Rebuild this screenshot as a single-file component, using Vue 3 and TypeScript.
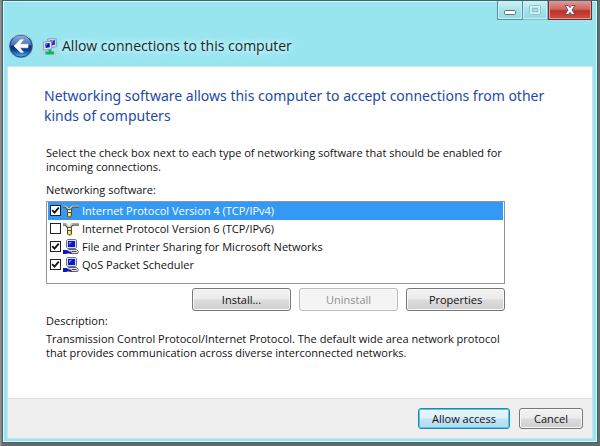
<script setup lang="ts">
import { computed, ref } from 'vue'

interface Component {
  id: string
  name: string
  kind: 'protocol' | 'service'
  enabled: boolean
}

const components = ref<Component[]>([
  { id: 'ipv4', name: 'Internet Protocol Version 4 (TCP/IPv4)', kind: 'protocol', enabled: true },
  { id: 'ipv6', name: 'Internet Protocol Version 6 (TCP/IPv6)', kind: 'protocol', enabled: false },
  { id: 'sharing', name: 'File and Printer Sharing for Microsoft Networks', kind: 'service', enabled: true },
  { id: 'qos', name: 'QoS Packet Scheduler', kind: 'service', enabled: true },
])
const selectedId = ref('ipv4')
const canUninstall = computed(() => components.value.some((c) => c.id === selectedId.value && c.kind === 'service'))
</script>

<template>
  <div class="desktop">
    <div class="window">
      <div class="caption">
        <button class="cap" type="button" aria-label="Minimize">
          <svg width="14" height="12" viewBox="0 0 14 12"><rect x="1.5" y="6.5" width="11" height="4" rx="1" fill="#fff" stroke="#5c6f7c" /></svg>
        </button>
        <button class="cap cap-max" type="button" aria-label="Maximize" disabled>
          <svg width="14" height="12" viewBox="0 0 14 12" fill="none"><rect x="2.5" y="2" width="9" height="7.5" stroke="#d5f3f7" stroke-width="2" /><rect x="1.5" y="1.5" width="11" height="9" rx="1" stroke="#8fbfc9" /><rect x="4.5" y="4.5" width="5" height="3" stroke="#8fbfc9" /></svg>
        </button>
        <button class="cap cap-close" type="button" aria-label="Close">
          <svg width="14" height="12" viewBox="0 0 14 12"><path d="M2 1.500h3.300L7 3.600l1.700-2.100H12L9 6l3 4.500H8.700L7 8.400l-1.700 2.100H2L5 6z" fill="#fff" stroke="#66525c" stroke-width="1" /></svg>
        </button>
      </div>
      <header class="titlebar">
        <button class="back" type="button" aria-label="Back">
          <svg width="26" height="26" viewBox="0 0 26 26">
            <defs>
              <linearGradient id="orb" x1="0" y1="0" x2="0" y2="1">
                <stop offset="0" stop-color="#91b3dd" /><stop offset=".46" stop-color="#456fb6" />
                <stop offset=".5" stop-color="#0d2b77" /><stop offset=".72" stop-color="#12489c" /><stop offset="1" stop-color="#41c5f2" />
              </linearGradient>
            </defs>
            <circle cx="13" cy="13" r="12" fill="#6e96b4" />
            <circle cx="13" cy="13" r="11" fill="url(#orb)" stroke="#294d87" />
            <path d="M5 4.800a11 11 0 0 1 16 0" fill="none" stroke="#d3e7f6" stroke-opacity=".7" />
            <path d="M6 13l6.500-6.300h3L11.800 11.200H20v3.600h-8.200l3.700 4.500h-3z" fill="#fff" stroke="#fff" stroke-width=".6" stroke-linejoin="round" />
          </svg>
        </button>
        <svg class="net-icon" width="16" height="17" viewBox="0 0 16 17">
          <path d="M5.500 1l8.500-1 .8 8.500-7 1.500z" fill="#d3d7df" stroke="#8391a6" stroke-width=".8" />
          <path d="M8 2.300l4.700-.6.400 5-4 .8z" fill="#2a35cc" /><path d="M9 2.300l3-.3-2 2.800z" fill="#8e9ff0" />
          <path d="M1.300 4l8-.6.500 7.400-8 1.300z" fill="#e4e7ed" stroke="#8391a6" stroke-width=".8" />
          <path d="M3.200 5.400l4.400-.4.300 4.200-4.200.8z" fill="#0814bd" /><path d="M3.500 5.700l2.800-.3-2.300 2.800z" fill="#6478ea" />
          <path d="M0 14.500h15" stroke="#c3cfd2" stroke-width="3" /><path d="M6.500 11.500h3v2H12v3H3.500v-3h3z" fill="#18ae69" stroke="#4ed08c" stroke-width=".5" />
        </svg>
        <h1>Allow connections to this computer</h1>
      </header>

      <form class="page" @submit.prevent>
        <main>
          <h2>Networking software allows this computer to accept connections from other kinds of computers</h2>
          <p class="intro">Select the check box next to each type of networking software that should be enabled for incoming connections.</p>
          <p id="list-label" class="list-label">Networking software:</p>
          <ul class="list" aria-labelledby="list-label">
            <li v-for="c in components" :key="c.id" :class="{ selected: c.id === selectedId }" @click="selectedId = c.id">
              <span class="check">
                <input :id="c.id" v-model="c.enabled" type="checkbox" />
                <svg v-if="c.enabled" width="11" height="11" viewBox="0 0 11 11"><path d="M2.200 5.200l2.300 2.500 4.300-5" fill="none" stroke="#111" stroke-width="1.800" /></svg>
              </span>
              <svg v-if="c.kind === 'protocol'" class="glyph" width="16" height="16" viewBox="0 0 16 16">
                <path d="M0 3.500h2.500l3.500 4 3.500-4H16" fill="none" stroke="#55554c" stroke-width="2.600" />
                <path d="M0 3h2.800l3.200 3.500L9.200 3H16" fill="none" stroke="#d6d4c8" stroke-width="1.200" />
                <rect x="4.500" y="6.500" width="4" height="3" fill="#e8e5d2" stroke="#55554c" />
                <path d="M4.500 9.500h4v3.500l-1 1h-2l-1-1z" fill="#ecd23a" stroke="#5a4d10" />
                <path d="M6 10v3" stroke="#fff6b0" />
              </svg>
              <svg v-else class="glyph" width="16" height="16" viewBox="0 0 16 16">
                <path d="M3.500 1.500l1-1h8l1 1v7l-1 1h-8l-1-1z" fill="#dcdee6" stroke="#6d7288" />
                <path d="M5 2h7v6H5z" fill="#0a18d6" /><path d="M6 3h3L6 6z" fill="#6f8cff" />
                <path d="M4.500 11.500l1.500-1h7.500l2 2-1 2H7z" fill="#e3e5ea" stroke="#5b5f70" />
                <path d="M9 12.500h4.500" stroke="#3c3f4c" />
                <path d="M0 11h3.500l2 1.500h3v2h-4L3 15H0z" fill="#0a18b8" />
              </svg>
              <label :for="c.id">{{ c.name }}</label>
            </li>
          </ul>
          <div class="actions">
            <button class="btn" type="button">Install...</button>
            <button class="btn" type="button" :disabled="!canUninstall">Uninstall</button>
            <button class="btn" type="button">Properties</button>
          </div>
          <p class="desc-label">Description:</p>
          <p class="description">Transmission Control Protocol/Internet Protocol. The default wide area network protocol that provides communication across diverse interconnected networks.</p>
        </main>
        <footer>
          <button class="btn primary" type="submit">Allow access</button>
          <button class="btn cancel" type="button">Cancel</button>
        </footer>
      </form>
    </div>
  </div>
</template>

<style>
body {
  margin: 0;
}
</style>

<style scoped>
* {
  box-sizing: border-box;
}
h1,
h2,
p,
ul {
  margin: 0;
  padding: 0;
  font-weight: 400;
}
button {
  font: inherit;
  padding: 0;
}
svg {
  display: block;
}
.desktop {
  display: flex;
  min-height: 100vh;
  padding: 0 2px 3px;
  background: linear-gradient(90deg, #999 0, #777 2px, #636b6c 3px, #636b6c);
  font-family: "Open Sans", "Noto Sans", sans-serif;
  font-size: 11px;
  line-height: 14px;
  color: #111;
}
.window {
  flex: 1;
  display: flex;
  flex-direction: column;
  min-width: 0;
  padding: 0 4px 3px;
  border: 1px solid #40646b;
  background: #98e5f0;
  box-shadow: inset 0 0 0 1px #d5f8fb;
}
.caption {
  display: flex;
  justify-content: flex-end;
  padding-right: 1px;
}
.cap {
  display: grid;
  place-items: center;
  width: 26px;
  height: 19px;
  border: 1px solid #5e8d97;
  border-top: 0;
  background: linear-gradient(#d0f2f6, #a6e2eb 50%, #91dbe6);
  box-shadow: inset 0 0 0 1px #c5f2f7;
}
.cap-max {
  width: 25px;
  border-left: 0;
  border-color: #83b8c1;
}
.cap-close {
  width: 44px;
  border-color: #702f35;
  background: linear-gradient(#df9b98, #cf6560 45%, #be2f27 55%, #ce5147);
  box-shadow: inset 0 0 0 1px #e09a95;
}
.titlebar {
  display: flex;
  align-items: center;
  height: 46px;
  padding: 6px 1px 0;
}
.back {
  border: 0;
  background: none;
}
.net-icon {
  margin-left: 8px;
}
h1 {
  margin-left: 4px;
  font-size: 14px;
  line-height: 20px;
  color: #17282c;
  text-shadow: 0 0 6px #effdff, 0 0 10px #d8faff;
}
.page {
  flex: 1;
  display: flex;
  flex-direction: column;
  border: 1px solid #cfe3e6;
  background: #fff;
}
main {
  flex: 1;
  padding: 19px 87px 10px 38px;
}
h2 {
  margin-right: -46px;
  margin-left: -2px;
  font-family: "Noto Sans", "Open Sans", sans-serif;
  font-size: 14px;
  line-height: 20px;
  color: #1c4aa8;
}
.intro {
  margin-top: 20px;
}
.list-label {
  margin-top: 9px;
}
.list {
  height: 83px;
  margin-top: 4px;
  border: 1px solid #90949c;
  padding: 0 1px;
  list-style: none;
}
li {
  display: flex;
  align-items: center;
  height: 18px;
  padding-left: 2px;
}
.selected {
  background: #3399f5;
  color: #fff;
}
.check {
  display: grid;
  padding-bottom: 2px;
}
.check > * {
  grid-area: 1 / 1;
}
.check svg {
  pointer-events: none;
}
input {
  appearance: none;
  width: 11px;
  height: 11px;
  margin: 0;
  border: 1px solid #222;
  background: #fff;
}
.glyph {
  margin: 0 3px 0 2px;
}
.actions {
  display: flex;
  justify-content: flex-end;
  gap: 8px;
  margin-top: 4px;
}
.btn {
  width: 99px;
  height: 23px;
  border: 1px solid #777;
  border-radius: 3px;
  background: linear-gradient(#f2f2f2, #ebebeb 48%, #dcdcdc 52%, #cfcfcf);
  box-shadow: inset 0 0 0 1px #f8f8f8;
  color: #111;
}
.btn:disabled {
  border-color: #b8bcbf;
  background: #f4f4f4;
  color: #929292;
}
.desc-label {
  margin-top: 3px;
}
.description {
  margin-top: 4px;
}
footer {
  display: flex;
  justify-content: flex-end;
  gap: 9px;
  padding: 9px;
  border-top: 1px solid #dfdfdf;
  background: #efefef;
}
footer .btn {
  height: 21px;
}
.primary {
  width: 92px;
  border-color: #2f83ab;
  background: linear-gradient(#e9f5fb, #dceff9 48%, #c3e4f5 52%, #b2dcf1);
  box-shadow: inset 0 0 0 1px #49cbf3;
}
.cancel {
  width: 64px;
}
</style>
